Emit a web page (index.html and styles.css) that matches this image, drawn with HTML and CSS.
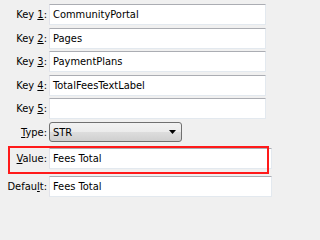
FILE: index.html
```html
<!DOCTYPE html>
<html>
<head>
<meta charset="utf-8">
<link rel="stylesheet" href="styles.css">
</head>
<body>
<div class="form">
  <div class="row"><label class="lbl">Key <u>1</u>:</label><div class="field key">CommunityPortal</div></div>
  <div class="row"><label class="lbl">Key <u>2</u>:</label><div class="field key">Pages</div></div>
  <div class="row"><label class="lbl">Key <u>3</u>:</label><div class="field key">PaymentPlans</div></div>
  <div class="row"><label class="lbl">Key <u>4</u>:</label><div class="field key">TotalFeesTextLabel</div></div>
  <div class="row"><label class="lbl">Key <u>5</u>:</label><div class="field key"></div></div>
  <div class="row row-select"><label class="lbl"><u>T</u>ype:</label>
    <div class="select"><span>STR</span><svg class="arrow" width="7" height="4" viewBox="0 0 7 4"><path d="M0 0H7L3.5 4Z" fill="#000"/></svg></div>
  </div>
  <div class="row row-value"><label class="lbl"><u>V</u>alue:</label><div class="field wide">Fees Total</div></div>
  <div class="row row-default"><label class="lbl">Defau<u>l</u>t:</label><div class="field wide">Fees Total</div></div>
  <div class="highlight"></div>
</div>
</body>
</html>
```
FILE: styles.css
```css
html, body {
  margin: 0;
  padding: 0;
  background: #f0f0f0;
}
.form {
  position: relative;
  display: flex;
  flex-direction: column;
  gap: 2.5px;
  padding-top: 4px;
  font-family: "DejaVu Sans Condensed", "DejaVu Sans", sans-serif;
  font-size: 11px;
  color: #000;
}
.row {
  display: flex;
  align-items: center;
  height: 21px;
  gap: 2px;
}
.row-select { height: 20px; margin-top: 0.5px; }
.row-value { margin-top: 3px; }
.row-default { margin-top: 4.5px; }
.lbl {
  width: 47px;
  text-align: right;
  white-space: nowrap;
  flex: none;
}
.field {
  box-sizing: border-box;
  height: 21px;
  background: #fff;
  border: 1px solid #e3e9ef;
  border-top-color: #abadb3;
  border-left-color: #e2e3ea;
  padding: 0 3px;
  line-height: 19px;
  white-space: nowrap;
  overflow: hidden;
  flex: none;
}
.key { width: 217px; }
.wide { width: 223px; }
.select {
  box-sizing: border-box;
  width: 133px;
  height: 20px;
  border: 1px solid #707070;
  border-radius: 3px;
  background: linear-gradient(#f2f2f2 0%, #ebebeb 50%, #dddddd 51%, #cfcfcf 100%);
  display: flex;
  align-items: center;
  justify-content: space-between;
  padding: 0 5px 0 3px;
  flex: none;
}
.arrow { display: block; }
.highlight {
  position: absolute;
  left: 8px;
  top: 146px;
  width: 261px;
  height: 28px;
  box-sizing: border-box;
  border: 2px solid #ff1a1a;
}
```
